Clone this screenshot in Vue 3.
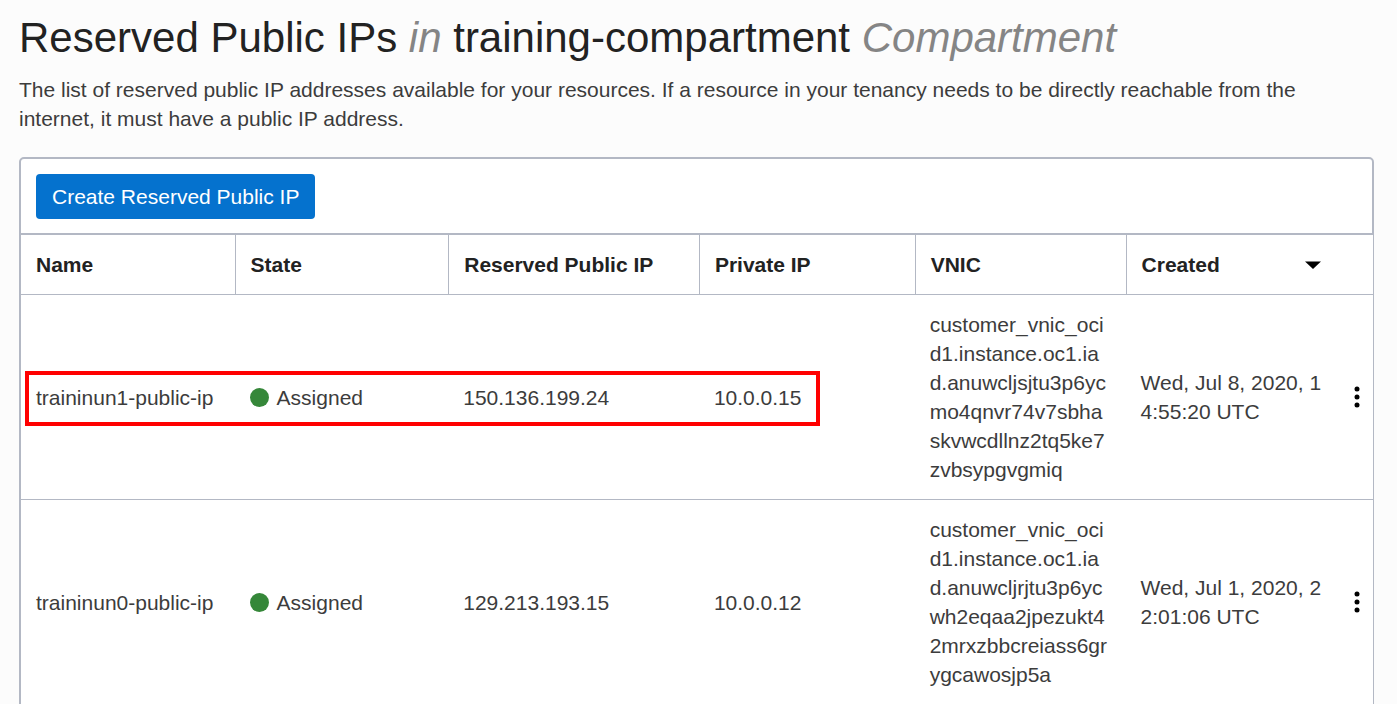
<script setup>
const columns = ['Name', 'State', 'Reserved Public IP', 'Private IP', 'VNIC']

const rows = [
  {
    name: 'traininun1-public-ip',
    state: 'Assigned',
    publicIp: '150.136.199.24',
    privateIp: '10.0.0.15',
    vnic: 'customer_vnic_ocid1.instance.oc1.iad.anuwcljsjtu3p6ycmo4qnvr74v7sbhaskvwcdllnz2tq5ke7zvbsypgvgmiq',
    created: 'Wed, Jul 8, 2020, 14:55:20 UTC',
    highlighted: true
  },
  {
    name: 'traininun0-public-ip',
    state: 'Assigned',
    publicIp: '129.213.193.15',
    privateIp: '10.0.0.12',
    vnic: 'customer_vnic_ocid1.instance.oc1.iad.anuwcljrjtu3p6ycwh2eqaa2jpezukt42mrxzbbcreiass6grygcawosjp5a',
    created: 'Wed, Jul 1, 2020, 22:01:06 UTC',
    highlighted: false
  }
]
</script>

<template>
  <main class="page">
    <h1>Reserved Public IPs <em>in</em> training-compartment <em>Compartment</em></h1>
    <p class="intro">
      The list of reserved public IP addresses available for your resources. If a resource in your
      tenancy needs to be directly reachable from the internet, it must have a public IP address.
    </p>

    <section class="panel">
      <div class="toolbar">
        <button type="button" class="create">Create Reserved Public IP</button>
      </div>
      <table>
        <colgroup>
          <col class="c-name" />
          <col class="c-state" />
          <col class="c-public" />
          <col class="c-private" />
          <col class="c-vnic" />
          <col />
          <col class="c-menu" />
        </colgroup>
        <thead>
          <tr>
            <th v-for="column in columns" :key="column" scope="col">{{ column }}</th>
            <th colspan="2" scope="col" aria-sort="descending">
              <button type="button" class="sort">
                Created
                <svg width="16" height="8" viewBox="0 0 16 8" aria-hidden="true">
                  <path d="M0 .6H16L8 8Z" />
                </svg>
              </button>
            </th>
          </tr>
        </thead>
        <tbody>
          <tr v-for="row in rows" :key="row.name">
            <td>
              {{ row.name }}
              <span v-if="row.highlighted" class="highlight"></span>
            </td>
            <td>
              <span class="state"><span class="dot"></span>{{ row.state }}</span>
            </td>
            <td>{{ row.publicIp }}</td>
            <td>{{ row.privateIp }}</td>
            <td class="wrap">{{ row.vnic }}</td>
            <td class="wrap">{{ row.created }}</td>
            <td class="menu-cell">
              <button type="button" class="menu" :aria-label="'Actions for ' + row.name">
                <svg width="6" height="22" viewBox="0 0 6 22" aria-hidden="true">
                  <circle cx="3" cy="3" r="2.5" />
                  <circle cx="3" cy="11" r="2.5" />
                  <circle cx="3" cy="19" r="2.5" />
                </svg>
              </button>
            </td>
          </tr>
        </tbody>
      </table>
    </section>
  </main>
</template>

<style>
body {
  background: #fcfcfc;
}
</style>

<style scoped>
.page {
  padding: 12px 23px 24px 19px;
  font-family: "Liberation Sans", Arial, sans-serif;
  font-size: 21px;
  line-height: 29px;
  color: #3c3c3c;
}

h1 {
  margin: 0;
  font-size: 42px;
  line-height: 52px;
  font-weight: 400;
  color: #222;
}

h1 em {
  color: #858585;
}

.intro {
  margin: 11px 0 24px;
}

.toolbar {
  padding: 15px 15px 14px;
  background: #fff;
  border: 2px solid #b3b8c4;
  border-radius: 5px 5px 0 0;
}

button {
  font: inherit;
  color: inherit;
  border: 0;
  background: none;
  cursor: pointer;
}

.create {
  display: block;
  padding: 8px 16px;
  border-radius: 4px;
  background: #0572ce;
  color: #fff;
}

table {
  width: 100%;
  table-layout: fixed;
  border-spacing: 0;
  background: #fff;
  border: solid #b3b8c4;
  border-width: 0 1px 0 2px;
}

.c-name {
  width: 15.8%;
}

.c-state {
  width: 15.8%;
}

.c-public {
  width: 18.54%;
}

.c-private {
  width: 15.96%;
}

.c-vnic {
  width: 15.6%;
}

.c-menu {
  width: 32px;
}

th,
td {
  padding: 15px;
  text-align: left;
  border-bottom: 1px solid #b3b8c4;
}

th {
  color: #222;
  font-weight: 700;
}

th + th {
  border-left: 1px solid #b3b8c4;
}

td {
  vertical-align: middle;
}

.sort {
  display: flex;
  align-items: center;
  justify-content: space-between;
  width: 100%;
  padding: 0 37px 0 0;
}

.sort svg {
  fill: #000;
}

.wrap {
  padding-right: 14px;
  word-break: break-all;
}

tbody tr {
  position: relative;
}

.state {
  display: flex;
  align-items: center;
  gap: 8px;
}

.dot {
  width: 19px;
  height: 19px;
  border-radius: 50%;
  background: #358739;
}

.menu-cell {
  padding: 0;
}

.menu {
  display: flex;
  align-items: center;
  justify-content: center;
  width: 100%;
  padding: 4px 0;
}

.menu svg {
  fill: #000;
}

.highlight {
  position: absolute;
  top: 76px;
  left: 4px;
  width: 58.8%;
  height: 55px;
  box-sizing: border-box;
  border: 4px solid #f00;
  pointer-events: none;
}
</style>
